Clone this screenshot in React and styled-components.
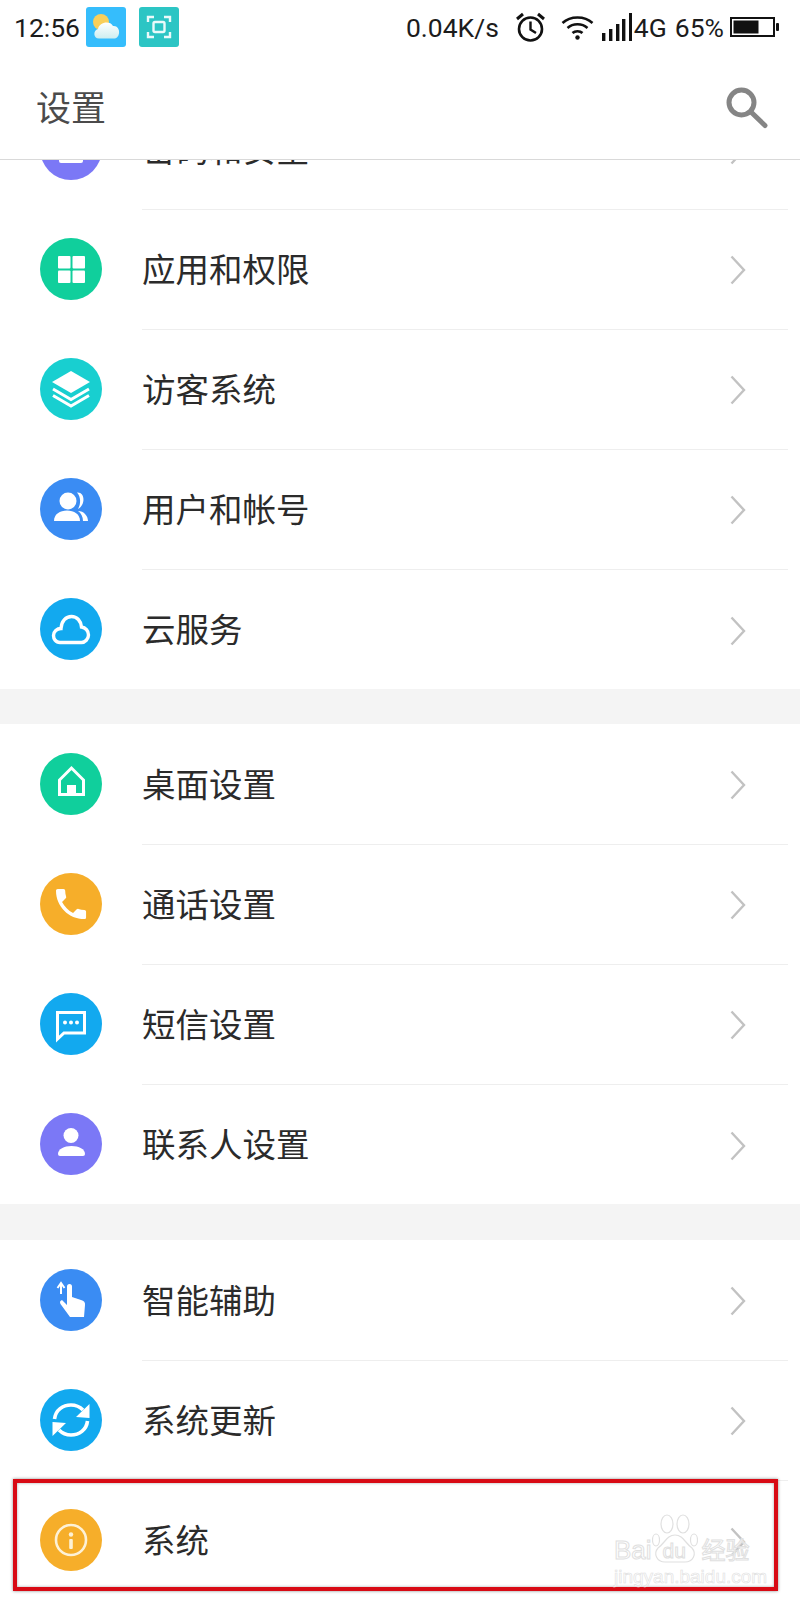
import React from 'react'
import styled, { createGlobalStyle } from 'styled-components'

const Global = createGlobalStyle`
  html, body { margin: 0; padding: 0; background: #fff; }
  * { box-sizing: border-box; }
`

const Page = styled.div`
  position: relative;
  width: 800px;
  height: 1600px;
  overflow: hidden;
  background: #fff;
  font-family: "Noto Sans CJK SC", "Liberation Sans", sans-serif;
`

const Header = styled.header`
  position: relative;
  z-index: 2;
  height: 160px;
  background: #fff;
  border-bottom: 1px solid #d9d9d9;
`

const StatusBar = styled.div`
  height: 56px;
  padding: 0 21px 2px 14px;
  display: flex;
  justify-content: space-between;
  align-items: center;
  font-family: Roboto, "Liberation Sans", sans-serif;
  font-size: 26.5px;
  color: #1c1c1c;
`

const StatusGroup = styled.div`
  display: flex;
  align-items: center;
`

const Tile = styled.div`
  width: 40px;
  height: 40px;
  margin-left: ${p => p.$left}px;
  border-radius: 3px;
  background: ${p => p.$bg};
  display: flex;
`

const StatusText = styled.span`
  margin-left: ${p => p.$left || 0}px;
  white-space: nowrap;
`

const StatusIcon = styled.svg`
  display: block;
  flex: none;
  margin-left: ${p => p.$left || 0}px;
`

const Toolbar = styled.div`
  height: 103px;
  padding: 0 32px 0 36px;
  display: flex;
  justify-content: space-between;
  align-items: center;
`

const Title = styled.h1`
  margin: 0 0 5px;
  font-size: 35px;
  font-weight: 400;
  line-height: 1;
  color: #4b4b4b;
`

const Scroller = styled.div`
  margin-top: -71px;
`

const Row = styled.div`
  height: 120px;
  padding-left: 40px;
  display: flex;
  align-items: flex-start;
`

const Circle = styled.div`
  width: 62px;
  height: 62px;
  flex: none;
  margin-top: 29px;
  border-radius: 50%;
  background: ${p => p.$bg};
  display: flex;
`

const RowBody = styled.div`
  flex: 1;
  height: 121px;
  margin: 0 12px 0 40px;
  padding-right: 42px;
  display: flex;
  justify-content: space-between;
  align-items: center;
  border-bottom: ${p => (p.$last ? 'none' : '1px solid #eeeeee')};
`

const Label = styled.span`
  margin-bottom: 3px;
  font-size: 33.5px;
  line-height: 1;
  color: #2b2b2b;
`

const ChevronIcon = styled.svg`
  display: block;
  margin-top: 2px;
`

const Band = styled.div`
  height: ${p => p.$h}px;
  background: #f4f4f4;
`

const Highlight = styled.div`
  position: absolute;
  left: 13px;
  top: 1479px;
  width: 765px;
  height: 112px;
  border: 4px solid #d80a14;
  box-shadow: 0 0 3px rgba(0, 0, 0, 0.45), inset 0 0 3px rgba(0, 0, 0, 0.35);
`

const Watermark = styled.div`
  position: absolute;
  left: 614px;
  top: 1513px;
  width: 145px;
  height: 72px;
`

const MarkTop = styled.div`
  display: flex;
  align-items: flex-end;
  height: 50px;
`

const Outlined = styled.span`
  position: relative;
  font-family: "Liberation Sans", "Noto Sans CJK SC", sans-serif;
  font-size: ${p => p.$size}px;
  line-height: 1;
  color: rgba(255, 255, 255, 0.75);
  -webkit-text-stroke: 1px #e0e0e0;
  white-space: nowrap;
`

const Paw = styled.div`
  position: relative;
  width: 46px;
  height: 50px;
  flex: none;
  margin-right: 4px;
`

const PawText = styled(Outlined)`
  position: absolute;
  left: 11px;
  bottom: 2px;
`

const MarkUrl = styled(Outlined)`
  display: block;
  margin-top: 4px;
  -webkit-text-stroke: 0.6px #e0e0e0;
`

const Glyph = ({ children }) => (
  <svg width="62" height="62" viewBox="0 0 62 62" fill="#fff">{children}</svg>
)

const icons = {
  lock: <rect x="19" y="28" width="24" height="17" rx="2" />,
  grid: (
    <>
      <rect x="18" y="18" width="12.5" height="12.5" rx="1" />
      <rect x="32.5" y="18" width="12.5" height="12.5" rx="1" />
      <rect x="18" y="32.5" width="12.5" height="12.5" rx="1" />
      <rect x="32.5" y="32.5" width="12.5" height="12.5" rx="1" />
    </>
  ),
  layers: (
    <>
      <path d="M31 13 L50 24 L31 35 L12 24 Z" />
      <path d="M13 31 L31 41.5 L49 31 M13 37.5 L31 48 L49 37.5" fill="none" stroke="#fff" strokeWidth="3" />
    </>
  ),
  users: (
    <>
      <circle cx="28" cy="23" r="8.5" />
      <path d="M14 43 C14 36 20 32.5 27 32.5 C34 32.5 40 36 40 43 Z" />
      <path d="M37 14.5 C45 13.5 46 27 38 31 C41 26 41 19 37 14.5 Z" />
      <path d="M38 33 C44 33 48 38 48 43 H43 C43 39 41 35 38 33 Z" />
    </>
  ),
  cloud: (
    <path
      d="M20 44.5 C15.5 44.5 13.5 40.5 13.5 37.5 C13.5 33.5 17 30.5 21 30.5 C21.5 23 26 18.5 31.5 18.5 C37 18.5 41 23 41.5 29 C45.5 29.5 48.5 33 48.5 37 C48.5 41 45 44.5 41.5 44.5 Z"
      fill="none"
      stroke="#fff"
      strokeWidth="3.4"
    />
  ),
  home: (
    <>
      <path d="M31.5 15 L19.5 27 V41.5 H43.5 V27 Z" fill="none" stroke="#fff" strokeWidth="3" />
      <path d="M27 42 V32 H36 V42 Z" />
    </>
  ),
  phone: (
    <path
      transform="translate(11 11) scale(1.67)"
      d="M6.62 10.79c1.44 2.83 3.76 5.14 6.59 6.59l2.2-2.2c.27-.27.67-.36 1.02-.24 1.12.37 2.33.57 3.57.57.55 0 1 .45 1 1V20c0 .55-.45 1-1 1-9.39 0-17-7.61-17-17 0-.55.45-1 1-1h3.5c.55 0 1 .45 1 1 0 1.25.2 2.45.57 3.57.11.35.03.74-.25 1.02l-2.2 2.2z"
    />
  ),
  message: (
    <>
      <path d="M17.5 19.5 H44.5 V40 H24 L17.5 46 Z" fill="none" stroke="#fff" strokeWidth="3" />
      <circle cx="25" cy="29.5" r="2" />
      <circle cx="31" cy="29.5" r="2" />
      <circle cx="37" cy="29.5" r="2" />
    </>
  ),
  contact: (
    <>
      <circle cx="31" cy="22.5" r="7.5" />
      <path d="M18 41 C18 36 24 33 31.5 33 C39 33 45 36 45 41 Q45 43 43 43 H20 Q18 43 18 41 Z" />
    </>
  ),
  touch: (
    <>
      <path d="M21 25 V15 M17.5 19 L21 14 L24.5 19" fill="none" stroke="#fff" strokeWidth="2" />
      <path d="M27 17.5 a2.5 2.5 0 0 1 5 0 V28 L41 31 Q45.5 32 45 36 L44 48 H30 L20.5 35 Q19 32 22 31 L27 36 Z" />
    </>
  ),
  sync: (
    <>
      <path d="M14.5 30 C15.5 21 23 16 31 16 C36 16 40 18 43 21" fill="none" stroke="#fff" strokeWidth="3.6" />
      <path d="M49.5 15 V29 L36 28 Z" />
      <path d="M47.5 32 C46.5 41 39 46 31 46 C26 46 22 44 19 41" fill="none" stroke="#fff" strokeWidth="3.6" />
      <path d="M12.5 47 V33 L26 34 Z" />
    </>
  ),
  info: (
    <>
      <circle cx="31" cy="31" r="15" fill="none" stroke="#fdf1d6" strokeWidth="2.6" />
      <circle cx="31" cy="25.5" r="2.2" fill="#fdf1d6" />
      <rect x="29.2" y="30" width="3.6" height="10" rx="1" fill="#fdf1d6" />
    </>
  ),
}

const Chevron = () => (
  <ChevronIcon width="16" height="30" viewBox="0 0 16 30" fill="none">
    <path d="M1.5 1.5 L14 15 L1.5 28.5" stroke="#c2c2c2" strokeWidth="2.4" />
  </ChevronIcon>
)

const groups = [
  {
    band: 35,
    rows: [
      { label: '密码和安全', icon: 'lock', color: '#7b78f6' },
      { label: '应用和权限', icon: 'grid', color: '#10cf9c' },
      { label: '访客系统', icon: 'layers', color: '#18cfd0' },
      { label: '用户和帐号', icon: 'users', color: '#3a8cf3' },
      { label: '云服务', icon: 'cloud', color: '#12a9ef' },
    ],
  },
  {
    band: 36,
    rows: [
      { label: '桌面设置', icon: 'home', color: '#10cf9c' },
      { label: '通话设置', icon: 'phone', color: '#f6ae2a' },
      { label: '短信设置', icon: 'message', color: '#12a9ef' },
      { label: '联系人设置', icon: 'contact', color: '#7b78f6' },
    ],
  },
  {
    rows: [
      { label: '智能辅助', icon: 'touch', color: '#3a8cf3' },
      { label: '系统更新', icon: 'sync', color: '#12a9ef' },
      { label: '系统', icon: 'info', color: '#f6ae2a' },
    ],
  },
]

function Status() {
  return (
    <StatusBar>
      <StatusGroup>
        <StatusText>12:56</StatusText>
        <Tile $left={6} $bg="#35bdfc">
          <svg width="40" height="40" viewBox="0 0 40 40">
            <defs>
              <linearGradient id="cloudFill" x1="0" y1="0" x2="0" y2="1">
                <stop offset="0" stopColor="#ffffff" />
                <stop offset="1" stopColor="#cdeef0" />
              </linearGradient>
            </defs>
            <circle cx="15" cy="15" r="8" fill="#f8cf5a" />
            <path d="M13 31.5 C7 31.5 7 23 12 22 C13 15 24 13 27 19 C35 18 35 31.5 28 31.5 Z" fill="url(#cloudFill)" />
          </svg>
        </Tile>
        <Tile $left={13} $bg="#2cc5c4">
          <svg width="40" height="40" viewBox="0 0 40 40" fill="none" stroke="#eafafa" strokeWidth="2.4">
            <path d="M9 15 V10 H15 M25 10 H31 V15 M31 25 V30 H25 M15 30 H9 V25" />
            <rect x="14.5" y="15" width="11" height="10" rx="1.5" />
          </svg>
        </Tile>
      </StatusGroup>
      <StatusGroup>
        <StatusText>0.04K/s</StatusText>
        <StatusIcon $left={16} width="31" height="31" viewBox="0 0 31 31" fill="none" stroke="#111">
          <circle cx="15.5" cy="17" r="11.5" strokeWidth="2.6" />
          <path d="M15.5 9.5 V17.5 L21 21" strokeWidth="2.4" />
          <path d="M2 7 L8 2 M29 7 L23 2" strokeWidth="3" />
        </StatusIcon>
        <StatusIcon $left={15} width="33" height="27" viewBox="0 0 33 27" fill="none" stroke="#111" strokeWidth="2.5">
          <path d="M1.5 9 C9.5 1.5 23.5 1.5 31.5 9" />
          <path d="M6.5 14 C12 9 21 9 26.5 14" />
          <path d="M11.5 19 C14 16.5 19 16.5 21.5 19" />
          <circle cx="16.5" cy="23.5" r="2.2" fill="#111" stroke="none" />
        </StatusIcon>
        <StatusIcon $left={8} width="30" height="28" viewBox="0 0 30 28" fill="#111">
          <rect x="0" y="20" width="3.4" height="8" />
          <rect x="7" y="16" width="3.4" height="12" />
          <rect x="14" y="11" width="3.4" height="17" />
          <rect x="20" y="6" width="3.4" height="22" />
          <rect x="27" y="0" width="3" height="28" />
        </StatusIcon>
        <StatusText $left={2}>4G</StatusText>
        <StatusText $left={8}>65%</StatusText>
        <StatusIcon $left={6} width="49" height="20" viewBox="0 0 49 20">
          <rect x="1" y="1" width="43" height="18" fill="#fff" stroke="#111" strokeWidth="2" />
          <rect x="3.5" y="3.5" width="25" height="13" fill="#111" />
          <rect x="46" y="6" width="3" height="8" rx="1" fill="#111" />
        </StatusIcon>
      </StatusGroup>
    </StatusBar>
  )
}

function App() {
  return (
    <Page>
      <Global />
      <Header>
        <Status />
        <Toolbar>
          <Title>设置</Title>
          <svg width="42" height="42" viewBox="0 0 42 42" fill="none" stroke="#858585" strokeLinecap="round">
            <circle cx="15.5" cy="15.5" r="12.5" strokeWidth="5" />
            <path d="M25 25 L39 38.5" strokeWidth="5" />
          </svg>
        </Toolbar>
      </Header>
      <Scroller>
        {groups.map(group => (
          <React.Fragment key={group.rows[0].label}>
            {group.rows.map((row, i) => (
              <Row key={row.label}>
                <Circle $bg={row.color}>
                  <Glyph>{icons[row.icon]}</Glyph>
                </Circle>
                <RowBody $last={i === group.rows.length - 1}>
                  <Label>{row.label}</Label>
                  <Chevron />
                </RowBody>
              </Row>
            ))}
            {group.band && <Band $h={group.band} />}
          </React.Fragment>
        ))}
      </Scroller>
      <Highlight />
      <Watermark>
        <MarkTop>
          <Outlined $size={26}>Bai</Outlined>
          <Paw>
            <svg width="46" height="50" viewBox="0 0 46 50" fill="rgba(255,255,255,.6)" stroke="#e0e0e0" strokeWidth="1.2">
              <ellipse cx="4" cy="27" rx="3.5" ry="6" />
              <ellipse cx="15" cy="11" rx="6" ry="9" />
              <ellipse cx="31" cy="11" rx="6" ry="9" />
              <ellipse cx="42" cy="27" rx="3.5" ry="6" />
              <path d="M23 22 C31 22 33 30 40 35 C45 41 41 49 33 49 H13 C5 49 1 41 6 35 C13 30 15 22 23 22 Z" />
            </svg>
            <PawText $size={21}>du</PawText>
          </Paw>
          <Outlined $size={24}>经验</Outlined>
        </MarkTop>
        <MarkUrl $size={19}>jingyan.baidu.com</MarkUrl>
      </Watermark>
    </Page>
  )
}

export default App
